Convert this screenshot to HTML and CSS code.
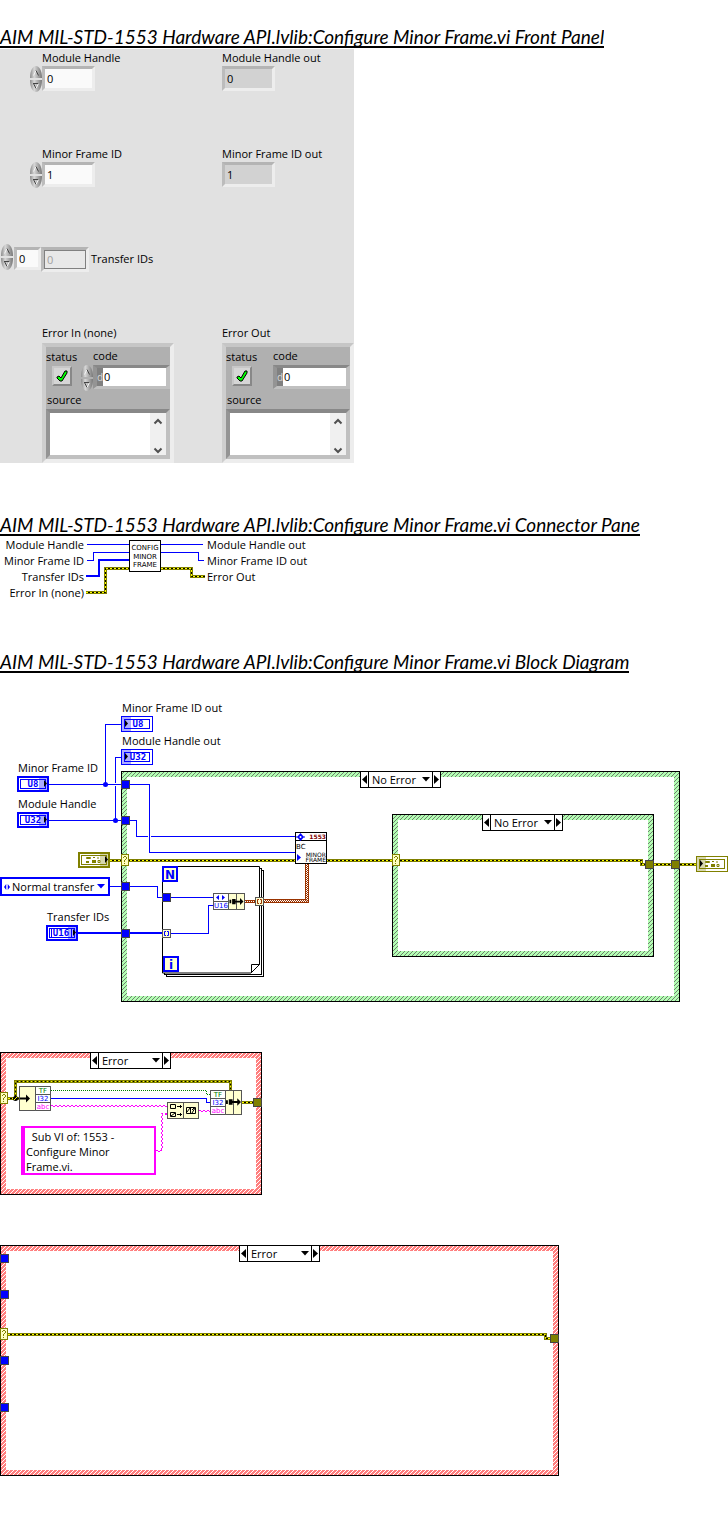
FILE: index.html
```html
<!DOCTYPE html>
<html lang="en">
<head>
<meta charset="utf-8">
<title>Configure Minor Frame.vi</title>
<link rel="stylesheet" href="styles.css">
</head>
<body>
<svg class="defs" width="0" height="0" aria-hidden="true">
  <defs>
    <pattern id="hatch-green" width="4" height="4" patternUnits="userSpaceOnUse">
      <rect width="4" height="4" fill="#b4ffb4"/>
      <path d="M0 3h1v1H0zM1 2h1v1H1zM2 1h1v1H2zM3 0h1v1H3z" fill="#6f7f6f" shape-rendering="crispEdges"/>
    </pattern>
    <pattern id="hatch-red" width="4" height="4" patternUnits="userSpaceOnUse">
      <rect width="4" height="4" fill="#ff7f7f"/>
      <path d="M0 3h1v1H0zM1 2h1v1H1zM2 1h1v1H2zM3 0h1v1H3z" fill="#fff" shape-rendering="crispEdges"/>
    </pattern>
    <linearGradient id="metal" x1="0" x2="1" y1="0" y2="0">
      <stop offset="0" stop-color="#8a8a8a"/><stop offset=".35" stop-color="#d8d8d8"/><stop offset="1" stop-color="#777"/>
    </linearGradient>
    <symbol id="spin-up" viewBox="0 0 12 13">
      <path d="M0 12C0 4 3 0 6 0s6 4 6 12z" fill="url(#metal)"/>
      <path d="M3.500 9.500L6 4.500" stroke="#f4f4f4" fill="none"/><path d="M6 4.500L8.500 9.500" stroke="#444" fill="none"/>
    </symbol>
    <symbol id="spin-down" viewBox="0 0 12 13">
      <path d="M0 1C0 9 3 13 6 13s6-4 6-12z" fill="url(#metal)"/>
      <path d="M3 4.500h6M3.500 4.500L6 9.500" stroke="#444" fill="none"/><path d="M6 9.500L8.500 4.500" stroke="#f4f4f4" fill="none"/>
    </symbol>
    <symbol id="tick" viewBox="0 0 14 14">
      <path d="M2 8l2-1 2 2 4-7h2v2L7 12H5L2 9z" fill="#0f0" stroke="#000"/>
    </symbol>
    <symbol id="bar-arrows" viewBox="0 0 16 42">
      <path d="M4.500 10.500L8 7l3.500 3.500M4.500 35.500L8 39l3.500-3.500" fill="none" stroke="#505050" stroke-width="2"/>
    </symbol>
    <symbol id="arrow-left" viewBox="0 0 7 15"><path d="M6 3v9L1 7.500z"/></symbol>
    <symbol id="arrow-right" viewBox="0 0 7 15"><path d="M1 3v9l5-4.500z"/></symbol>
    <symbol id="arrow-down" viewBox="0 0 8 5"><path d="M0 0h8L4 4.500z"/></symbol>
    <symbol id="tunnel" viewBox="0 0 9 9"><rect x=".5" y=".5" width="8" height="8" fill="#00f" stroke="#444"/></symbol>
    <symbol id="tunnel-error" viewBox="0 0 9 9"><rect x=".5" y=".5" width="8" height="8" fill="#808000" stroke="#444"/></symbol>
    <symbol id="tunnel-index" viewBox="0 0 9 9">
      <rect x=".5" y=".5" width="8" height="8" fill="#ffffd0" stroke="#555"/>
      <path d="M4 2.500H2.500v4H4M5 2.500h1.500v4H5" fill="none" stroke="currentColor"/>
    </symbol>
    <symbol id="case-input" viewBox="0 0 8 12">
      <rect x=".5" y=".5" width="7" height="11" fill="#ffffc0" stroke="#808000"/>
      <path d="M2 3h1v1H2zM3 2h2v1H3zM5 3h1v2H5zM4 5h1v1H4zM3 6h1v2H3zM3 9h1v1H3z" fill="#808000"/>
    </symbol>
    <symbol id="terminal-in" viewBox="0 0 32 16">
      <rect x="1" y="1" width="30" height="14" fill="#fff" stroke="currentColor" stroke-width="2"/>
      <rect x="3.500" y="3.500" width="25" height="9" fill="none" stroke="currentColor"/>
      <path d="M22 2h8v12h-8z" fill="currentColor" opacity=".32"/>
      <path d="M27 4v7l3-3.500z" fill="#000"/>
    </symbol>
    <symbol id="terminal-out" viewBox="0 0 32 16">
      <rect x=".5" y=".5" width="31" height="15" fill="#fff" stroke="currentColor"/>
      <rect x="3.500" y="3.500" width="25" height="9" fill="none" stroke="currentColor"/>
      <path d="M1 1h9v14H1z" fill="currentColor" opacity=".32"/>
      <path d="M4 4v7l3-3.500z" fill="#000"/>
    </symbol>
    <symbol id="cluster-glyph" viewBox="0 0 15 6">
      <path d="M.5 .5h4v1h-4zM7 .5h2M12 0v2M12 3.500h2v2h-2z" fill="none" stroke="#808000"/>
      <path d="M0 4h3v2H0zM6 3h4v3H6z" fill="#808000"/>
    </symbol>
    <symbol id="bundle-arrow" viewBox="0 0 16 8">
      <path d="M0 2h2v4H0zM3 1h4v6H3zM3 3h9V0l4 4-4 4V5H3z"/>
    </symbol>
  </defs>
</svg>

<main>
  <section>
    <h2>AIM MIL-STD-1553 Hardware API.lvlib:Configure Minor Frame.vi Front Panel</h2>
    <form class="panel">
      <div class="field">
        <label for="module-handle">Module Handle</label>
        <div class="row">
          <span class="spinner"><button type="button" aria-label="Increase"><svg><use href="#spin-up"/></svg></button><button type="button" aria-label="Decrease"><svg><use href="#spin-down"/></svg></button></span>
          <input class="number" id="module-handle" value="0">
        </div>
      </div>
      <div class="field">
        <label for="module-handle-out">Module Handle out</label>
        <div class="row"><input class="number output" id="module-handle-out" value="0" readonly></div>
      </div>
      <div class="field">
        <label for="frame-id">Minor Frame ID</label>
        <div class="row">
          <span class="spinner"><button type="button" aria-label="Increase"><svg><use href="#spin-up"/></svg></button><button type="button" aria-label="Decrease"><svg><use href="#spin-down"/></svg></button></span>
          <input class="number" id="frame-id" value="1">
        </div>
      </div>
      <div class="field">
        <label for="frame-id-out">Minor Frame ID out</label>
        <div class="row"><input class="number output" id="frame-id-out" value="1" readonly></div>
      </div>
      <div class="array">
        <span class="spinner large"><button type="button" aria-label="Increase"><svg><use href="#spin-up"/></svg></button><button type="button" aria-label="Decrease"><svg><use href="#spin-down"/></svg></button></span>
        <input class="number index" aria-label="Index" value="0">
        <input class="number empty" id="transfer-ids" value="0">
        <label for="transfer-ids">Transfer IDs</label>
      </div>
      <fieldset class="error">
        <legend>Error In (none)</legend>
        <div class="cluster">
          <div class="pair">
            <div class="status">
              <label for="status-in">status</label>
              <span class="check"><input type="checkbox" id="status-in" checked><svg><use href="#tick"/></svg></span>
            </div>
            <div class="code">
              <label for="code-in">code</label>
              <div class="row">
                <span class="spinner"><button type="button" aria-label="Increase"><svg><use href="#spin-up"/></svg></button><button type="button" aria-label="Decrease"><svg><use href="#spin-down"/></svg></button></span>
                <span class="well"><span class="radix">d</span><input id="code-in" value="0"></span>
              </div>
            </div>
          </div>
          <label class="source-label" for="source-in">source</label>
          <div class="source"><textarea id="source-in"></textarea><svg><use href="#bar-arrows"/></svg></div>
        </div>
      </fieldset>
      <fieldset class="error">
        <legend>Error Out</legend>
        <div class="cluster">
          <div class="pair">
            <div class="status">
              <label for="status-out">status</label>
              <span class="check"><input type="checkbox" id="status-out" checked><svg><use href="#tick"/></svg></span>
            </div>
            <div class="code">
              <label for="code-out">code</label>
              <div class="row"><span class="well"><span class="radix">d</span><input id="code-out" value="0" readonly></span></div>
            </div>
          </div>
          <label class="source-label" for="source-out">source</label>
          <div class="source"><textarea id="source-out" readonly></textarea><svg><use href="#bar-arrows"/></svg></div>
        </div>
      </fieldset>
    </form>
  </section>

  <section class="connector-section">
    <h2>AIM MIL-STD-1553 Hardware API.lvlib:Configure Minor Frame.vi Connector Pane</h2>
    <div class="connector">
      <ul class="inputs"><li>Module Handle</li><li>Minor Frame ID</li><li>Transfer IDs</li><li>Error In (none)</li></ul>
      <svg class="wiring" width="121" height="64" viewBox="85 537 121 64">
        <path class="wire" d="M87 544.500H129M87 560.500H93.500V552.500H129M161 544.500H203M161 552.500H198.500V560.500H204"/>
        <path class="wire thick" d="M86 576H99V560H129"/>
        <path class="err-edge" d="M86 592.500H105.500V568.500H129M161 568.500H191.500V576.500H205"/><path class="err-core" d="M86 592.500H105.500V568.500H129M161 568.500H191.500V576.500H205"/><path class="err-dash" d="M86 592.500H105.500V568.500H129M161 568.500H191.500V576.500H205"/>
        <rect class="node" x="129.500" y="540.500" width="31" height="31"/>
        <g class="micro mid"><text x="145" y="550">CONFIG</text><text x="145" y="559">MINOR</text><text x="145" y="567">FRAME</text></g>
      </svg>
      <ul class="outputs"><li>Module Handle out</li><li>Minor Frame ID out</li><li>Error Out</li></ul>
    </div>
  </section>

  <section class="diagram-section">
    <h2>AIM MIL-STD-1553 Hardware API.lvlib:Configure Minor Frame.vi Block Diagram</h2>
    <figure class="diagram main-diagram">
      <svg width="728" height="302" viewBox="0 700 728 302">
        <rect x="121.500" y="771.500" width="558" height="230" fill="url(#hatch-green)" stroke="#000"/>
        <rect x="127" y="777" width="547" height="219" fill="#fff"/>
        <rect x="392.500" y="814.500" width="261" height="142" fill="url(#hatch-green)" stroke="#000"/>
        <rect x="398" y="820" width="250" height="131" fill="#fff"/>

        <g class="node"><rect x="166.500" y="870.500" width="97" height="106"/><rect x="164.500" y="868.500" width="97" height="106"/><path d="M162.500 866.500h97v98l-8.500 8.500h-88.500z"/><path d="M259.500 964.500h-8v8z"/></g>

        <g class="wire">
          <path d="M49 784.500H121M105.500 784.500V724.500H121M130 784.500H149.500V852.500H295"/>
          <path d="M49 820.500H121M115.500 820.500V786M115.500 783V757.500H121M130 820.500H136.500V836.500H148M151 836.500H295"/>
          <path d="M110 886.500H121M130 886.500H157.500V897.500H213M171 933.500H208.500V905.500H213"/>
        </g>
        <path class="wire thick" d="M78 933H162"/>
        <circle cx="105.500" cy="784.500" r="2.500" fill="#00f"/><circle cx="115.500" cy="820.500" r="2.500" fill="#00f"/>

        <path class="err-edge" d="M110 860.500H641.500V864.500H696"/><path class="err-core" d="M110 860.500H641.500V864.500H696"/><path class="err-dash" d="M110 860.500H641.500V864.500H696"/>
        <path class="brown" d="M264 901H307V864"/><path class="brown-dots" d="M264 900.500H306.500V864"/><path class="brown-dots shift" d="M264 901.500H307.500V864"/>
        <path class="brown thin" d="M245 901.500H255"/><path class="brown-dots" d="M245 901.500H255"/>

        <use href="#tunnel" x="121" y="780" width="9" height="9"/><use href="#tunnel" x="121" y="816" width="9" height="9"/>
        <use href="#tunnel" x="121" y="882" width="9" height="9"/><use href="#tunnel" x="121" y="929" width="9" height="9"/>
        <use href="#tunnel" x="162" y="893" width="9" height="9"/>
        <use class="blue" href="#tunnel-index" x="162" y="929" width="9" height="9"/>
        <use class="rust" href="#tunnel-index" x="255" y="897" width="9" height="9"/>
        <use href="#case-input" x="121" y="854" width="8" height="12"/><use href="#case-input" x="392" y="854" width="8" height="12"/>
        <use href="#tunnel-error" x="645" y="860" width="9" height="9"/><use href="#tunnel-error" x="671" y="860" width="9" height="9"/>

        <g class="blue">
          <use href="#terminal-out" x="121" y="716" width="32" height="16"/><use href="#terminal-out" x="121" y="749" width="32" height="16"/>
          <use href="#terminal-in" x="17" y="776" width="32" height="16"/><use href="#terminal-in" x="17" y="812" width="32" height="16"/>
          <use href="#terminal-in" x="46" y="925" width="32" height="16"/>
        </g>
        <g class="type mid"><text x="138" y="727">U8</text><text x="138" y="760">U32</text><text x="33" y="787">U8</text><text x="33" y="823">U32</text><text x="61" y="936">U16</text></g>
        <path d="M54 928.500h-2.500v9h2.500M69 928.500h2.500v9h-2.500" fill="none" stroke="#00f"/>
        <g class="olive"><use href="#terminal-in" x="78" y="852" width="32" height="16"/><use href="#terminal-out" x="696" y="856" width="32" height="16"/></g>
        <use href="#cluster-glyph" x="86" y="857" width="15" height="6"/><use href="#cluster-glyph" x="705" y="861" width="15" height="6"/>

        <g class="loop"><rect x="163" y="867" width="14" height="14"/><rect x="164" y="957" width="14" height="14"/></g>
        <g class="loop-text mid"><text x="170" y="879">N</text><text x="171" y="969">i</text></g>

        <rect x="213.500" y="893.500" width="31" height="16" fill="#ffffd0" stroke="#555"/>
        <path d="M214 894h14v15h-14z" fill="#fff"/><path d="M228.500 893v17M236.500 893v17M213 901.500h15" stroke="#555" fill="none"/>
        <path d="M216 897.500l3-2.500v5zM225 897.500l-3-2.500v5z" fill="#00f"/>
        <text class="micro blue mid" x="221" y="908">U16</text>
        <use href="#bundle-arrow" x="229" y="898" width="15" height="7"/>

        <rect class="node" x="295.500" y="832.500" width="31" height="31"/><path d="M295 840.500h32" stroke="#000"/>
        <path d="M300.500 833l3.500 4-3.500 4-3.500-4zM296 836.500h9v1h-9z" fill="#00f"/><circle cx="300.500" cy="837" r="1" fill="#fff"/>
        <path d="M297 854v7l4-3.500z" fill="#00f"/>
        <text class="micro small end maroon" x="326" y="839">1553</text>
        <text class="micro" x="296" y="849">BC</text>
        <g class="micro small end"><text x="326" y="857">MINOR</text><text x="326" y="862">FRAME</text></g>
        <g class="caption"><text x="122" y="712">Minor Frame ID out</text><text x="122" y="745">Module Handle out</text><text x="18" y="772">Minor Frame ID</text><text x="18" y="808">Module Handle</text><text x="47" y="921">Transfer IDs</text></g>
      </svg>
      <div class="selector outer-case"><button type="button" aria-label="Previous case"><svg><use href="#arrow-left"/></svg></button><span class="choice"><select aria-label="Case"><option>No Error</option><option>Error</option></select><svg><use href="#arrow-down"/></svg></span><button type="button" aria-label="Next case"><svg><use href="#arrow-right"/></svg></button></div>
      <div class="selector inner-case"><button type="button" aria-label="Previous case"><svg><use href="#arrow-left"/></svg></button><span class="choice"><select aria-label="Case"><option>No Error</option><option>Error</option></select><svg><use href="#arrow-down"/></svg></span><button type="button" aria-label="Next case"><svg><use href="#arrow-right"/></svg></button></div>
      <div class="enum"><svg class="lr" viewBox="0 0 8 8"><path d="M3 0v8L0 4zM5 0v8l3-4z"/></svg><select aria-label="Transfer type"><option>Normal transfer</option></select><svg class="down"><use href="#arrow-down"/></svg></div>
    </figure>

    <figure class="diagram">
      <svg width="262" height="143" viewBox="0 1052 262 143">
        <rect x=".5" y="1052.500" width="261" height="142" fill="url(#hatch-red)" stroke="#000"/>
        <rect x="6" y="1058" width="250" height="131" fill="#fff"/>
        <path class="err-edge" d="M8 1098.500H19M15.500 1098.500V1081.500H230.500V1090M242 1102.500H254"/><path class="err-core" d="M8 1098.500H19M15.500 1098.500V1081.500H230.500V1090M242 1102.500H254"/><path class="err-dash" d="M8 1098.500H19M15.500 1098.500V1081.500H230.500V1090M242 1102.500H254"/>
        <circle cx="15.500" cy="1098.500" r="2.500"/><path d="M14 1100L17 1097" stroke="#ff0"/>
        <path d="M51 1090.500H206.500V1094.500H210" fill="none" stroke="#008000" stroke-dasharray="1 1"/>
        <path class="wire" d="M51 1098.500H206.500V1102.500H210"/>
        <g class="string-wire">
          <path d="M51 1105.500H167M156 1150.500H162M161.500 1150V1113.500H167M199 1110.500H210"/>
          <path class="shift" d="M51 1106.500H167M156 1151.500H162M162.500 1150V1114.500H167M199 1111.500H210"/>
        </g>
        <use href="#case-input" x="0" y="1092" width="8" height="12"/>
        <use href="#tunnel-error" x="253" y="1098" width="9" height="9"/>
        <g stroke="#555">
          <rect x="19.500" y="1086.500" width="31" height="24" fill="#ffffd0"/><path d="M35.500 1086.500h15v24h-15zM35.500 1094.500h15M35.500 1102.500h15" fill="#fff"/>
          <rect x="210.500" y="1090.500" width="31" height="24" fill="#ffffd0"/><path d="M210.500 1090.500h15v24h-15zM210.500 1098.500h15M210.500 1106.500h15" fill="#fff"/><path d="M233.500 1090v25"/>
          <rect x="167.500" y="1102.500" width="31" height="16" fill="#ffffd0"/><path d="M183.500 1102v17"/>
        </g>
        <path d="M20 1097.500h6v-3l4 4-4 4v-3h-6z"/>
        <use href="#bundle-arrow" x="226" y="1098" width="15" height="8"/>
        <g fill="none" stroke="#000">
          <path d="M170.500 1104.500h5v4h-5zM170.500 1112.500h5v4h-5zM171 1116l4-3M177 1106.500h5M180.500 1105v3M177 1114.500h5M180.500 1113v3M186.500 1107.500h9v6h-9zM190.500 1108v5M187 1112l3-4M192 1113l3-5M192 1110l2-2"/>
        </g>
        <g class="micro green mid"><text x="43" y="1093">TF</text><text x="218" y="1097">TF</text></g>
        <g class="micro blue mid"><text x="43" y="1101">I32</text><text x="218" y="1105">I32</text></g>
        <g class="micro pink mid"><text x="43" y="1109">abc</text><text x="218" y="1113">abc</text></g>
      </svg>
      <div class="selector error-case"><button type="button" aria-label="Previous case"><svg><use href="#arrow-left"/></svg></button><span class="choice"><select aria-label="Case"><option>Error</option><option>No Error</option></select><svg><use href="#arrow-down"/></svg></span><button type="button" aria-label="Next case"><svg><use href="#arrow-right"/></svg></button></div>
      <p class="string">&nbsp; Sub VI of: 1553 -<br>Configure Minor<br>Frame.vi.</p>
    </figure>

    <figure class="diagram">
      <svg width="559" height="231" viewBox="0 1245 559 231">
        <rect x=".5" y="1245.500" width="558" height="230" fill="url(#hatch-red)" stroke="#000"/>
        <rect x="6" y="1251" width="547" height="219" fill="#fff"/>
        <path class="err-edge" d="M8 1334.500H545.500V1338.500H551"/><path class="err-core" d="M8 1334.500H545.500V1338.500H551"/><path class="err-dash" d="M8 1334.500H545.500V1338.500H551"/>
        <use href="#tunnel" x="0" y="1254" width="9" height="9"/><use href="#tunnel" x="0" y="1290" width="9" height="9"/>
        <use href="#tunnel" x="0" y="1356" width="9" height="9"/><use href="#tunnel" x="0" y="1403" width="9" height="9"/>
        <use href="#case-input" x="0" y="1328" width="8" height="12"/>
        <use href="#tunnel-error" x="550" y="1334" width="9" height="9"/>
      </svg>
      <div class="selector bypass-case"><button type="button" aria-label="Previous case"><svg><use href="#arrow-left"/></svg></button><span class="choice"><select aria-label="Case"><option>Error</option><option>No Error</option></select><svg><use href="#arrow-down"/></svg></span><button type="button" aria-label="Next case"><svg><use href="#arrow-right"/></svg></button></div>
    </figure>
  </section>
</main>
</body>
</html>
```
FILE: styles.css
```css
* { box-sizing: border-box; }
body { margin: 0; background: #fff; color: #000; font: 11px/15px "Open Sans", "Noto Sans", sans-serif; }
main { padding: 26px 0 50px; }
svg { display: block; }
.defs { position: absolute; }
input, select, textarea, button { font: inherit; color: inherit; margin: 0; padding: 0; border: 0; border-radius: 0; background: none; outline: 0; }
button { cursor: pointer; }

h2 { width: fit-content; height: 22px; margin: 0; overflow: hidden; border-bottom: 2px solid #000; font: italic 19px/22px Lato, sans-serif; white-space: nowrap; }

/* Front panel */
.panel { display: grid; grid-template-columns: 180px 174px; grid-template-rows: 96px 96px 84px auto; width: fit-content; margin-top: 1px; background: #e1e1e1; }
.field { padding: 1px 0 0 42px; }
.field label { display: block; padding-bottom: 1px; }
.row { display: flex; align-items: flex-start; }
.field .spinner, .code .spinner { margin-left: -12px; }
.spinner { display: flex; flex: none; flex-direction: column; width: 12px; }
.spinner button { height: 13px; }
.spinner svg { width: 100%; height: 13px; }
.number { width: 53px; height: 25px; padding-left: 2px; border: 3px solid; border-color: #b4b4b4 #ededed #ededed #bcbcbc; background: #fafafa; }
.output { background: #d2d2d2; }
.array { grid-column: 1 / 3; display: flex; align-items: flex-start; padding-top: 6px; }
.array .spinner { width: 14px; margin-top: -3px; }
.array .number { width: 27px; }
.array .index { height: 23px; }
.array .empty { width: 48px; background: #e8e8e8; color: #a0a0a0; box-shadow: inset 0 0 0 1px #808080; padding-left: 3px; }
.array label { padding: 4px 0 0 2px; }
.error { min-width: 0; max-width: 174px; margin: 0; padding: 0 0 0 42px; border: 0; }
legend { padding: 0 0 3px; line-height: 15px; }
.cluster { border: 4px solid; border-color: #c6c6c6 #ededed #ededed #cecece; background: #b0b0b0; }
.pair { display: flex; gap: 15px; height: 45px; }
.status { width: 32px; }
.status label { display: block; padding-top: 2px; }
.check { position: relative; display: block; width: 20px; height: 20px; margin: 2px 0 0 6px; }
.check input { appearance: none; display: block; width: 20px; height: 20px; border: 2px solid; border-color: #c8c8c8 #888 #888 #c8c8c8; background: #d6d6d6; }
.check svg { position: absolute; inset: 3px; width: 14px; height: 14px; pointer-events: none; }
.code { flex: 1; min-width: 0; }
.code label { display: block; padding: 1px 0 2px; }
.well { display: flex; flex: 1; min-width: 0; height: 24px; border: 4px solid; border-width: 3px 4px; border-color: #888 #c0c0c0 #c0c0c0 #949494; background: #fff; line-height: 18px; }
.radix { flex: none; width: 6px; background: #808080; color: #d8d8d8; font-size: 10px; }
.well input { flex: 1; width: 0; min-width: 0; padding-left: 1px; }
.source-label { display: block; padding-left: 1px; height: 17px; }
.source { display: flex; height: 50px; border: 4px solid; border-color: #888 #c0c0c0 #c0c0c0 #949494; background: #fff; }
.source textarea { flex: 1; width: 0; min-width: 0; resize: none; }
.source svg { width: 16px; height: 42px; background: #f0f0f0; }

/* Connector pane */
.connector-section { padding-top: 51px; }
.connector { display: flex; align-items: flex-start; padding-top: 1px; }
.connector ul { margin: 0; padding: 0; list-style: none; line-height: 16px; white-space: nowrap; }
.inputs { width: 85px; text-align: right; }
.connector .inputs { padding-right: 1px; }
.connector .outputs { padding-left: 1px; }

/* Diagrams */
.diagram-section { padding-top: 50px; }
.diagram { position: relative; margin: 0 0 50px; }
.diagram:last-child { margin-bottom: 0; }
.main-diagram { margin-top: 27px; }
.wire { fill: none; stroke: #00f; shape-rendering: crispEdges; }
.thick { stroke-width: 2px; }
.err-edge { fill: none; stroke: #808000; stroke-width: 3px; }
.err-core { fill: none; stroke: #000; }
.err-dash { fill: none; stroke: #ff0; stroke-dasharray: 2 2; }
.brown { fill: none; stroke: #993300; stroke-width: 4px; }
.thin { stroke-width: 3px; }
.brown-dots { fill: none; stroke: #fff; stroke-dasharray: 1 1; }
.string-wire { fill: none; stroke: #ff00ff; stroke-dasharray: 2 2; }
.shift { stroke-dashoffset: 2px; }
.brown-dots.shift { stroke-dashoffset: 1px; }
.node { fill: #fff; stroke: #000; }
.mid { text-anchor: middle; }
.end { text-anchor: end; }
.caption { font: 11px "Open Sans", "Noto Sans", sans-serif; }
.micro { font: 7px "DejaVu Sans", sans-serif; }
.small { font-size: 6px; }
.type { font: bold 9px "DejaVu Sans Mono", monospace; fill: #0000ff; }
.loop { fill: #ffffd0; stroke: #00f; stroke-width: 2px; }
.loop-text { font: bold 12px "DejaVu Sans", sans-serif; fill: #00f; }
.blue { color: #00f; }
text.blue, .blue text { fill: #00f; }
.olive { color: #808000; }
.rust { color: #993300; }
.maroon { fill: #800000; font-weight: bold; }
.green { fill: #008000; }
.pink { fill: #ff00ff; }

.selector { position: absolute; top: 0; display: flex; width: 81px; height: 17px; border: 1px solid #000; background: #fff; }
.selector button { width: 7px; }
.selector button svg { width: 7px; height: 15px; }
.choice { position: relative; flex: 1; border: solid #000; border-width: 0 1px; }
.choice select { appearance: none; display: block; width: 100%; height: 15px; padding-left: 3px; line-height: 15px; }
.choice svg { position: absolute; top: 5px; right: 2px; width: 8px; height: 5px; pointer-events: none; }
.outer-case { top: 71px; left: 360px; }
.inner-case { top: 114px; left: 482px; }
.error-case { left: 90px; }
.bypass-case { left: 239px; }
.enum { position: absolute; top: 177px; left: 0; display: flex; align-items: center; width: 110px; height: 19px; padding: 0 3px 0 1px; border: 2px solid #00f; background: #fff; fill: #00f; }
.enum select { flex: 1; min-width: 0; appearance: none; padding-left: 1px; height: 15px; }
.enum .lr { width: 8px; height: 6px; }
.enum .down { width: 8px; height: 5px; }
.string { position: absolute; top: 74px; left: 21px; width: 135px; height: 49px; margin: 0; padding: 1px 0 0 1px; border: 2px solid #f0f; border-left-width: 4px; background: #fff; }
```
